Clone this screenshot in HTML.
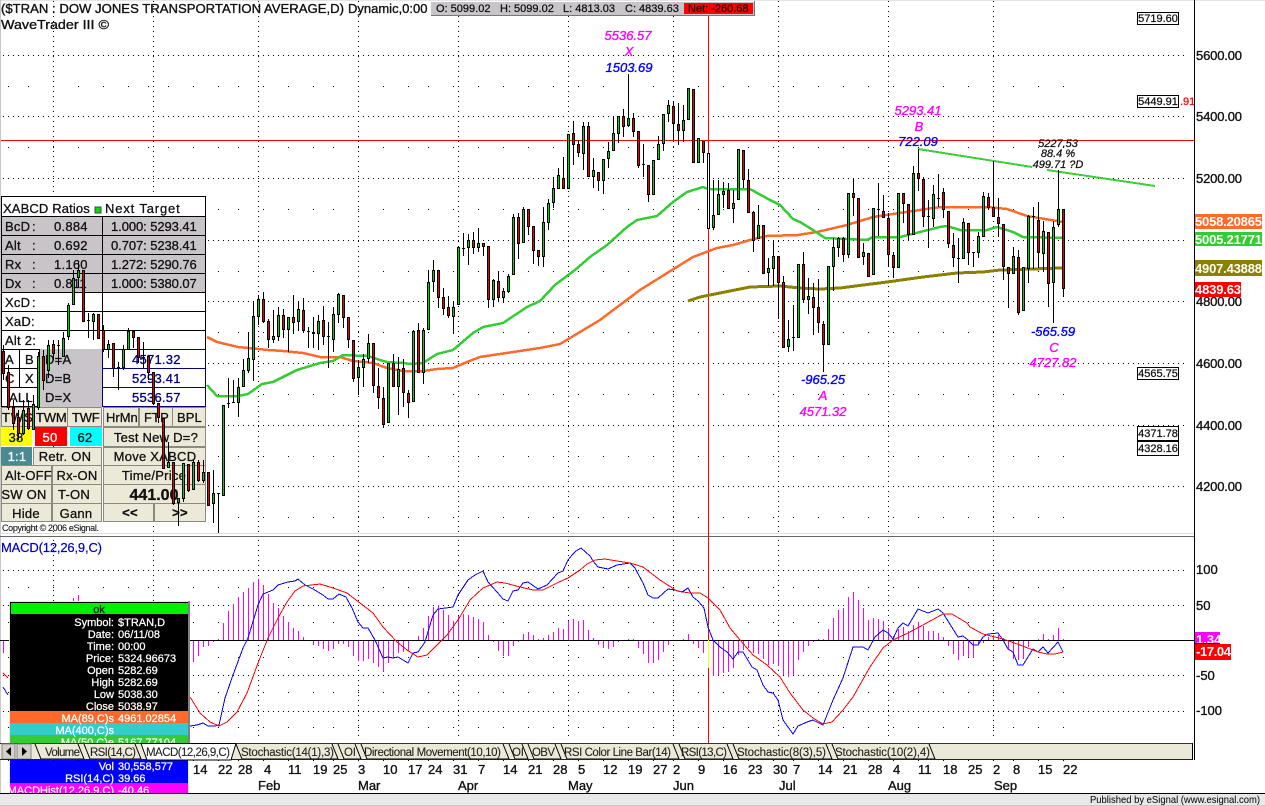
<!DOCTYPE html>
<html><head><meta charset="utf-8"><title>$TRAN</title>
<style>
html,body{margin:0;padding:0;background:#fff;width:1265px;height:806px;overflow:hidden}
svg{display:block;font-family:"Liberation Sans",Arial,sans-serif}
.c{shape-rendering:crispEdges}
text{fill:#111;stroke:#111;stroke-width:.25px}
.g{fill:none;stroke:#000;stroke-width:1;stroke-dasharray:1 4;shape-rendering:crispEdges}
.p text{font-size:13px;letter-spacing:.25px;stroke-width:.3px}
.b{fill:#ece9d8;stroke:#8a8a80;shape-rendering:crispEdges}
.m{fill:#f0f;stroke:#f0f;font-style:italic;font-size:13px;text-anchor:middle;stroke-width:.35px}
.bl{fill:#00f;stroke:#00f;font-style:italic;font-size:13px;text-anchor:middle;stroke-width:.35px}
.k{font-style:italic;font-size:11px;text-anchor:middle}
.ax{font-size:13px;stroke-width:.35px}
.w{fill:#fff;stroke:#fff;font-size:11px;stroke-width:.25px}
.r{text-anchor:end}
.t{font-size:11.5px;stroke-width:.1px;fill:#222;stroke:#222}
.tag{fill:#fff;stroke:#fff;font-size:13px;font-weight:bold;stroke-width:0}
.bx{font-size:11px;text-anchor:middle}
.mid{text-anchor:middle}
</style></head>
<body>
<svg width="1265" height="806" viewBox="0 0 1265 806" xmlns="http://www.w3.org/2000/svg">
<defs>
<path id="wk" d="M8 0h1M28 0h1M53 0h1M78 0h1M103 0h1M128 0h1M148 0h1M168 0h1M193 0h1M218 0h1M238 0h1M263 0h1M288 0h1M313 0h1M333 0h1M358 0h1M383 0h1M408 0h1M428 0h1M453 0h1M478 0h1M503 0h1M528 0h1M553 0h1M578 0h1M603 0h1M628 0h1M653 0h1M673 0h1M698 0h1M723 0h1M748 0h1M773 0h1M793 0h1M818 0h1M843 0h1M868 0h1M893 0h1M918 0h1M943 0h1M968 0h1M993 0h1M1013 0h1M1038 0h1M1063 0h1" stroke="#000" stroke-width="1" class="c"/>
</defs>
<rect width="1265" height="806" fill="#fff"/>
<path d="M0 0H1265M.5 0V793" stroke="#c8c8c8" fill="none" class="c"/>

<!-- grid -->
<path class="g" d="M3 55.5H1185M3 116.5H1185M3 178.5H1185M3 240.5H1185M3 301.5H1185M3 363.5H1185M3 425.5H1185M3 486.5H1185M3 570.5H1185M3 605.5H1185M3 675.5H1185M3 711.5H1185"/>
<path class="g" d="M53.5 1V535M153.5 1V535M258.5 1V535M358.5 1V535M458.5 1V535M568.5 1V535M673.5 1V535M778.5 1V535M888.5 1V535M993.5 1V535M53.5 540V740M153.5 540V740M258.5 540V740M358.5 540V740M458.5 540V740M568.5 540V740M673.5 540V740M778.5 540V740M888.5 540V740M993.5 540V740"/>
<use href="#wk" y="86.5"/><use href="#wk" y="147.5"/><use href="#wk" y="209.5"/><use href="#wk" y="271.5"/><use href="#wk" y="332.5"/><use href="#wk" y="394.5"/><use href="#wk" y="456.5"/><use href="#wk" y="517.5"/>
<use href="#wk" y="587.5"/><use href="#wk" y="622.5"/><use href="#wk" y="657.5"/><use href="#wk" y="692.5"/><use href="#wk" y="727.5"/>

<!-- XABCD panel -->
<g class="p">
<rect x="1.5" y="196.5" width="204" height="153" fill="#fff" stroke="#000" class="c"/>
<rect x="2" y="216" width="203" height="76" fill="#c8c4c8" class="c"/>
<path d="M1 216.5H206M1 235.5H206M1 254.5H206M1 273.5H206M1 292.5H206M1 311.5H206M1 330.5H206M102.5 216V349" stroke="#000" class="c"/>
<text x="3" y="213" textLength="87">XABCD Ratios</text><rect x="95" y="207" width="6" height="6" fill="#00e000" stroke="#444" class="c"/><text x="105" y="213" textLength="75">Next Target</text>
<text x="5" y="231">BcD</text><text x="32" y="231">:</text><text x="54" y="231">0.884</text><text x="111" y="231" textLength="86">1.000: 5293.41</text>
<text x="5" y="250">Alt</text><text x="32" y="250">:</text><text x="54" y="250">0.692</text><text x="111" y="250" textLength="86">0.707: 5238.41</text>
<text x="5" y="269">Rx</text><text x="32" y="269">:</text><text x="54" y="269">1.160</text><text x="111" y="269" textLength="86">1.272: 5290.76</text>
<text x="5" y="288">Dx</text><text x="32" y="288">:</text><text x="54" y="288">0.811</text><text x="111" y="288" textLength="86">1.000: 5380.07</text>
<text x="5" y="307">XcD</text><text x="32" y="307">:</text><text x="5" y="326">XaD:</text><text x="5" y="345">Alt 2:</text>
<rect x="40" y="349" width="62" height="58" fill="#c8c4c8" class="c"/>
<rect x="1.5" y="349.5" width="18" height="19" fill="#fff" stroke="#000" class="c"/><rect x="19.5" y="349.5" width="20" height="19" fill="#fff" stroke="#000" class="c"/>
<rect x="1.5" y="368.5" width="18" height="19" fill="#fff" stroke="#000" class="c"/><rect x="19.5" y="368.5" width="20" height="19" fill="#fff" stroke="#000" class="c"/>
<rect x="1.5" y="387.5" width="38" height="19" fill="#fff" stroke="#000" class="c"/>
<rect x="102.5" y="349.5" width="103" height="19" fill="#fff" stroke="#000080" class="c"/><rect x="102.5" y="368.5" width="103" height="19" fill="#fff" stroke="#000080" class="c"/><rect x="102.5" y="387.5" width="103" height="19" fill="#fff" stroke="#000080" class="c"/>
<text x="5" y="364">A</text><text x="25" y="364">B</text><text x="45" y="364">D=A</text>
<text x="5" y="383">C</text><text x="25" y="383">X</text><text x="45" y="383">D=B</text>
<text x="9" y="402">ALL</text><text x="45" y="402">D=X</text>
<text x="132" y="364" style="fill:#000080;stroke:#000080">4571.32</text><text x="132" y="383" style="fill:#000080;stroke:#000080">5293.41</text><text x="132" y="402" style="fill:#000080;stroke:#000080">5536.57</text>
<rect class="b" x="1.5" y="407.5" width="33" height="19"/><rect class="b" x="34.5" y="407.5" width="33" height="19"/><rect class="b" x="67.5" y="407.5" width="34" height="19"/><rect class="b" x="103.5" y="407.5" width="35" height="19"/><rect class="b" x="139.5" y="407.5" width="33" height="19"/><rect class="b" x="172.5" y="407.5" width="33" height="19"/>
<text x="2" y="422" textLength="31">TWS</text><text x="36" y="422" textLength="31">TWM</text><text x="72" y="422" textLength="28">TWF</text><text x="106" y="422" textLength="32">HrMn</text><text x="144" y="422" textLength="25">FTP</text><text x="177" y="422" textLength="25">BPL</text>
<rect x="1" y="427" width="31" height="19" fill="#ff0" class="c"/><rect x="35" y="427" width="32" height="19" fill="#f00" class="c"/><rect x="70" y="427" width="32" height="19" fill="#0ff" class="c"/>
<rect class="b" x="103.5" y="427.5" width="102" height="19"/>
<text x="16" y="442" class="mid">38</text><text x="50" y="442" class="mid" style="fill:#fff;stroke:#fff">50</text><text x="85" y="442" class="mid">62</text><text x="156" y="442" class="mid">Test New D=?</text>
<rect x="1" y="447" width="31" height="18" fill="#4a8a92" class="c"/><text x="17" y="461" class="mid" style="fill:#fff;stroke:#fff">1:1</text>
<rect class="b" x="33.5" y="447.5" width="68" height="18"/><text x="65" y="461" class="mid">Retr. ON</text>
<rect class="b" x="103.5" y="447.5" width="102" height="18"/><text x="155" y="461" class="mid">Move XABCD</text>
<rect class="b" x="1.5" y="465.5" width="50" height="19"/><text x="5" y="480" textLength="47">Alt-OFF</text>
<rect class="b" x="52.5" y="465.5" width="49" height="19"/><text x="77" y="480" class="mid">Rx-ON</text>
<rect class="b" x="103.5" y="465.5" width="102" height="19"/><text x="154" y="480" class="mid">Time/Price</text>
<rect class="b" x="1.5" y="484.5" width="50" height="19"/><text x="24" y="499" class="mid">SW ON</text>
<rect class="b" x="52.5" y="484.5" width="49" height="19"/><text x="74" y="499" class="mid">T-ON</text>
<rect class="b" x="103.5" y="484.5" width="102" height="19"/><text x="154" y="500" class="mid" style="font-size:16px;font-weight:bold;letter-spacing:0">441.00</text>
<rect class="b" x="1.5" y="503.5" width="50" height="18"/><text x="26" y="518" class="mid">Hide</text>
<rect class="b" x="52.5" y="503.5" width="49" height="18"/><text x="76" y="518" class="mid">Gann</text>
<rect class="b" x="103.5" y="503.5" width="50" height="18"/><text x="130" y="517" class="mid" style="font-weight:bold">&lt;&lt;</text>
<rect class="b" x="154.5" y="503.5" width="51" height="18"/><text x="180" y="517" class="mid" style="font-weight:bold">&gt;&gt;</text>
<text x="2" y="531" textLength="97" style="font-size:9px;stroke-width:.1px;letter-spacing:0">Copyright © 2006 eSignal.</text>
</g>
<path d="M0 533.5H1194" stroke="#ddd" class="c"/><path d="M0 536.5H1194" stroke="#666" class="c"/>

<!-- red cursor lines -->
<path d="M1 140.5H1194M708.5 16V743" stroke="#f00" class="c"/>

<!-- moving averages -->
<g fill="none" stroke-linejoin="round" class="c">
<polyline stroke="#ff6a2a" stroke-width="2.5" points="207,337 217,342 238,347 268,350 283,351 303,353 320,357 340,357 353,361 373,363 387,368 403,371 423,371 437,369 453,368 467,362 480,357 500,354 520,351 540,348 560,344 575,335 600,320 620,305 640,290 672,270 693,257 717,248 733,245 750,240 767,236 798,235 817,232 847,225 873,217 900,213 933,208 943,207 987,207 1007,209 1027,216 1063,222"/>
<polyline stroke="#32cd32" stroke-width="2.5" points="207,385 217,396 238,396 248,394 262,384 273,382 283,377 297,370 310,366 320,363 333,361 343,355 368,356 380,360 387,362 403,363 410,364 423,363 437,354 453,350 473,333 483,327 503,323 527,307 540,301 555,285 575,270 590,257 607,245 627,227 637,220 657,216 673,202 687,192 703,187 708,189 750,189 770,200 780,205 793,219 800,222 813,230 825,238 867,240 873,237 900,237 940,227 947,226 960,230 987,230 997,227 1013,232 1023,237 1063,238"/>
<polyline stroke="#8b8000" stroke-width="3" points="688,301 700,297 720,293 750,287 780,286 800,288 820,289 840,288 887,282 923,277 957,273 983,272 1000,270 1063,268"/>
<path stroke="#3ccf3c" stroke-width="2" d="M918 149L1032 167M1047 170L1155 186"/>
</g>

<!-- candle wicks -->
<path class="c" stroke="#000" fill="none" d="M3.5 345V380M8.5 365V410M13.5 400V430M18.5 410V440M23.5 400V435M28.5 400V430M33.5 395V430M38.5 352V410M43.5 350V390M48.5 340V378M53.5 340V360M58.5 340V365M63.5 332V356M68.5 303V340M73.5 270V305M78.5 262V287M83.5 270V321M88.5 313V338M93.5 313V340M98.5 314V338M103.5 325V352M108.5 340V358M113.5 343V377M118.5 362V390M123.5 345V370M128.5 328V350M133.5 330V348M138.5 337V363M143.5 342V368M148.5 356V380M153.5 372V405M158.5 403V423M163.5 418V468M168.5 442V467M173.5 462V505M178.5 498V526M183.5 463V502M188.5 464V492M193.5 460V490M198.5 460V482M203.5 460V483M208.5 472V505M213.5 470V523M218.5 493V533M223.5 405V495M228.5 378V408M233.5 380V403M238.5 378V417M243.5 359V387M248.5 332V373M253.5 301V381M258.5 295V325M263.5 292V323M268.5 319V348M273.5 310V343M278.5 307V341M283.5 309V338M288.5 317V352M293.5 295V334M298.5 302V331M303.5 298V333M308.5 327V348M313.5 317V348M318.5 315V350M323.5 306V345M328.5 322V368M333.5 307V352M338.5 293V323M343.5 295V328M348.5 317V348M353.5 340V382M358.5 360V395M363.5 354V387M368.5 334V363M373.5 343V393M378.5 368V409M383.5 387V428M388.5 363V422M393.5 354V386M398.5 357V415M403.5 359V407M408.5 390V418M413.5 330V402M418.5 323V372M423.5 328V384M428.5 270V330M433.5 260V292M438.5 270V308M443.5 288V315M448.5 296V318M453.5 301V334M458.5 247V305M463.5 233V256M468.5 234V265M473.5 232V254M478.5 228V252M483.5 243V256M488.5 246V308M493.5 279V307M498.5 271V302M503.5 288V303M508.5 274V293M513.5 214V275M518.5 213V259M523.5 207V243M528.5 209V235M533.5 226V264M538.5 250V266M543.5 207V267M548.5 199V230M553.5 177V208M558.5 168V189M563.5 157V189M568.5 134V189M573.5 121V165M578.5 140V157M583.5 122V170M588.5 122V176M593.5 158V188M598.5 172V191M603.5 159V194M608.5 142V168M613.5 117V150M618.5 116V143M623.5 109V137M628.5 74V127M633.5 113V137M638.5 131V168M643.5 144V177M648.5 165V202M653.5 160V194M658.5 136V159M663.5 114V151M668.5 100V122M673.5 102V140M678.5 103V145M683.5 105V142M688.5 88V119M693.5 89V162M698.5 138V162M703.5 141V163M713.5 180V230M718.5 180V215M723.5 182V208M728.5 183V208M733.5 190V223M738.5 149V199M743.5 150V188M748.5 169V212M753.5 211V252M758.5 205V238M763.5 225V273M768.5 258V286M773.5 240V286M778.5 256V319M783.5 276V347M788.5 320V352M793.5 305V351M798.5 264V337M803.5 252V303M808.5 278V314M813.5 283V335M818.5 279V333M823.5 321V372M828.5 266V344M833.5 238V291M838.5 237V257M843.5 237V262M848.5 193V258M853.5 178V216M858.5 198V257M863.5 243V265M868.5 253V276M873.5 208V274M878.5 183V236M883.5 195V217M888.5 213V267M893.5 252V278M898.5 193V267M903.5 193V223M908.5 204V241M913.5 166V234M918.5 149V191M923.5 177V227M928.5 200V248M933.5 185V227M938.5 174V207M943.5 188V218M948.5 211V248M953.5 233V267M958.5 238V283M963.5 218V258M968.5 223V265M973.5 252V267M978.5 232V258M983.5 192V236M988.5 193V210M993.5 161V216M998.5 198V237M1003.5 224V280M1008.5 267V308M1013.5 247V273M1018.5 250V315M1023.5 267V310M1028.5 215V283M1033.5 207V269M1038.5 202V268M1043.5 221V272M1048.5 232V307M1053.5 221V323M1058.5 170V227M1063.5 209V297"/>
<!-- doji ticks -->
<path class="c" stroke="#000" d="M87 320.5h3M57 345.5h3M117 367.5h3M142 357.5h3M217 493.5h3M227 403.5h3M232 402.5h3M307 331.5h3M327 336.5h3M462 248.5h3M642 164.5h3M792 337.5h3M877 209.5h3M927 216.5h3M937 198.5h3M957 258.5h3M972 252.5h3M1032 216.5h3"/>
<!-- green bodies -->
<path class="c" stroke="#000" fill="#00d400" d="M22.5 410.5h2v23h-2zM32.5 404.5h2v25h-2zM37.5 356.5h2v51h-2zM47.5 345.5h2v25h-2zM62.5 338.5h2v18h-2zM67.5 305.5h2v31h-2zM72.5 278.5h2v26h-2zM77.5 270.5h2v7h-2zM92.5 314.5h2v7h-2zM107.5 344.5h2v5h-2zM122.5 349.5h2v18h-2zM127.5 331.5h2v18h-2zM167.5 462.5h2v5h-2zM177.5 498.5h2v4h-2zM182.5 463.5h2v35h-2zM192.5 462.5h2v27h-2zM202.5 472.5h2v8h-2zM212.5 493.5h2v10h-2zM222.5 405.5h2v90h-2zM237.5 387.5h2v15h-2zM242.5 370.5h2v16h-2zM247.5 358.5h2v12h-2zM252.5 316.5h2v43h-2zM257.5 299.5h2v17h-2zM272.5 336.5h2v3h-2zM277.5 315.5h2v21h-2zM287.5 317.5h2v12h-2zM297.5 309.5h2v12h-2zM317.5 321.5h2v12h-2zM332.5 314.5h2v25h-2zM337.5 294.5h2v20h-2zM357.5 367.5h2v10h-2zM362.5 359.5h2v8h-2zM367.5 343.5h2v15h-2zM387.5 363.5h2v59h-2zM397.5 369.5h2v17h-2zM412.5 331.5h2v70h-2zM422.5 330.5h2v42h-2zM427.5 282.5h2v47h-2zM432.5 270.5h2v11h-2zM452.5 307.5h2v9h-2zM457.5 247.5h2v57h-2zM467.5 240.5h2v7h-2zM477.5 243.5h2v4h-2zM492.5 280.5h2v19h-2zM502.5 291.5h2v6h-2zM507.5 276.5h2v15h-2zM512.5 217.5h2v57h-2zM522.5 209.5h2v33h-2zM542.5 222.5h2v34h-2zM547.5 203.5h2v19h-2zM552.5 188.5h2v14h-2zM557.5 175.5h2v13h-2zM567.5 134.5h2v54h-2zM582.5 126.5h2v27h-2zM592.5 170.5h2v6h-2zM602.5 159.5h2v21h-2zM607.5 151.5h2v7h-2zM612.5 133.5h2v17h-2zM617.5 116.5h2v17h-2zM627.5 118.5h2v7h-2zM652.5 160.5h2v34h-2zM657.5 144.5h2v15h-2zM662.5 114.5h2v29h-2zM667.5 105.5h2v8h-2zM682.5 120.5h2v10h-2zM687.5 88.5h2v31h-2zM697.5 138.5h2v24h-2zM712.5 215.5h2v12h-2zM717.5 194.5h2v20h-2zM722.5 191.5h2v3h-2zM732.5 203.5h2v5h-2zM737.5 149.5h2v50h-2zM757.5 225.5h2v13h-2zM767.5 268.5h2v4h-2zM772.5 256.5h2v12h-2zM787.5 339.5h2v7h-2zM797.5 264.5h2v73h-2zM807.5 296.5h2v3h-2zM827.5 266.5h2v78h-2zM832.5 247.5h2v19h-2zM837.5 238.5h2v9h-2zM847.5 193.5h2v61h-2zM862.5 252.5h2v4h-2zM872.5 208.5h2v66h-2zM897.5 193.5h2v74h-2zM912.5 173.5h2v61h-2zM932.5 194.5h2v24h-2zM962.5 222.5h2v36h-2zM977.5 236.5h2v16h-2zM982.5 196.5h2v40h-2zM1012.5 256.5h2v17h-2zM1022.5 267.5h2v43h-2zM1027.5 216.5h2v52h-2zM1042.5 231.5h2v22h-2zM1052.5 227.5h2v55h-2zM1057.5 209.5h2v15h-2z"/>
<!-- red bodies -->
<path class="c" stroke="#000" fill="#ee0000" d="M2.5 351.5h2v22h-2zM7.5 372.5h2v35h-2zM12.5 407.5h2v16h-2zM17.5 417.5h2v16h-2zM27.5 408.5h2v20h-2zM42.5 356.5h2v24h-2zM52.5 344.5h2v9h-2zM82.5 270.5h2v51h-2zM97.5 314.5h2v24h-2zM102.5 330.5h2v19h-2zM112.5 343.5h2v25h-2zM132.5 331.5h2v6h-2zM137.5 337.5h2v20h-2zM147.5 356.5h2v16h-2zM152.5 372.5h2v31h-2zM157.5 403.5h2v14h-2zM162.5 418.5h2v50h-2zM172.5 462.5h2v41h-2zM187.5 464.5h2v26h-2zM197.5 462.5h2v18h-2zM207.5 472.5h2v33h-2zM262.5 299.5h2v22h-2zM267.5 321.5h2v18h-2zM282.5 315.5h2v14h-2zM292.5 317.5h2v5h-2zM302.5 310.5h2v20h-2zM312.5 332.5h2v1h-2zM322.5 320.5h2v16h-2zM342.5 295.5h2v22h-2zM347.5 317.5h2v22h-2zM352.5 340.5h2v38h-2zM372.5 343.5h2v42h-2zM377.5 386.5h2v11h-2zM382.5 398.5h2v26h-2zM392.5 363.5h2v23h-2zM402.5 368.5h2v24h-2zM407.5 393.5h2v9h-2zM417.5 330.5h2v42h-2zM437.5 270.5h2v27h-2zM442.5 297.5h2v11h-2zM447.5 307.5h2v8h-2zM472.5 240.5h2v7h-2zM482.5 243.5h2v3h-2zM487.5 246.5h2v53h-2zM497.5 281.5h2v16h-2zM517.5 217.5h2v26h-2zM527.5 209.5h2v17h-2zM532.5 226.5h2v24h-2zM537.5 250.5h2v6h-2zM562.5 178.5h2v10h-2zM572.5 133.5h2v11h-2zM577.5 144.5h2v8h-2zM587.5 126.5h2v50h-2zM597.5 172.5h2v8h-2zM622.5 116.5h2v10h-2zM632.5 118.5h2v13h-2zM637.5 131.5h2v34h-2zM647.5 165.5h2v29h-2zM672.5 106.5h2v17h-2zM677.5 124.5h2v6h-2zM692.5 89.5h2v73h-2zM702.5 141.5h2v11h-2zM727.5 190.5h2v18h-2zM742.5 150.5h2v29h-2zM747.5 180.5h2v32h-2zM752.5 212.5h2v28h-2zM762.5 225.5h2v48h-2zM777.5 256.5h2v26h-2zM782.5 282.5h2v65h-2zM802.5 264.5h2v35h-2zM812.5 297.5h2v10h-2zM817.5 307.5h2v15h-2zM822.5 324.5h2v20h-2zM842.5 238.5h2v16h-2zM852.5 193.5h2v4h-2zM857.5 198.5h2v59h-2zM867.5 253.5h2v23h-2zM882.5 211.5h2v6h-2zM887.5 218.5h2v36h-2zM892.5 255.5h2v12h-2zM902.5 193.5h2v10h-2zM907.5 204.5h2v30h-2zM917.5 173.5h2v5h-2zM922.5 179.5h2v37h-2zM942.5 192.5h2v17h-2zM947.5 211.5h2v32h-2zM952.5 245.5h2v12h-2zM967.5 223.5h2v29h-2zM987.5 197.5h2v10h-2zM992.5 207.5h2v9h-2zM997.5 217.5h2v6h-2zM1002.5 224.5h2v42h-2zM1007.5 267.5h2v6h-2zM1017.5 257.5h2v55h-2zM1037.5 220.5h2v32h-2zM1047.5 232.5h2v51h-2zM1062.5 209.5h2v79h-2z"/>
<path class="c" stroke="#000" fill="#fff" d="M707.5 153.5h2v75h-2z"/>

<!-- title -->
<text x="1" y="13" style="font-size:13px;stroke-width:.35px" textLength="343" lengthAdjust="spacingAndGlyphs">($TRAN : DOW JONES TRANSPORTATION AVERAGE,D)</text>
<text x="348" y="13" style="font-size:13px;stroke-width:.35px">Dynamic,0:00</text>
<text x="1" y="29" style="font-size:13px;stroke-width:.35px" textLength="108" lengthAdjust="spacingAndGlyphs">WaveTrader III ©</text>

<!-- OHLC strip -->
<rect x="430" y="1" width="325" height="15" fill="#c8c4c8" class="c"/>
<path d="M430.5 16V1.5H754" stroke="#fff" fill="none" class="c"/><path d="M431 15.5H754.5V1" stroke="#777" fill="none" class="c"/>
<rect x="684" y="3" width="69" height="11" fill="#f00" class="c"/>
<text x="436" y="12" style="font-size:11px">O: 5099.02</text><text x="500" y="12" style="font-size:11px">H: 5099.02</text><text x="563" y="12" style="font-size:11px">L: 4813.03</text><text x="625" y="12" style="font-size:11px">C: 4839.63</text><text x="688" y="12" style="font-size:11px">Net: -260.68</text>

<!-- annotations -->
<text class="m" x="628" y="40">5536.57</text><text class="m" x="629" y="56">X</text><text class="bl" x="629" y="72">1503.69</text>
<text class="m" x="918" y="115">5293.41</text><text class="m" x="919" y="131">B</text><text class="bl" x="918" y="146">722.09</text>
<text class="k" x="1058" y="147">5227.53</text><text class="k" x="1058" y="157">88.4 %</text><text class="k" x="1058" y="168">499.71 ?D</text>
<text class="bl" x="1053" y="336">-565.59</text><text class="m" x="1054" y="352">C</text><text class="m" x="1053" y="367">4727.82</text>
<text class="bl" x="823" y="384">-965.25</text><text class="m" x="823" y="400">A</text><text class="m" x="823" y="416">4571.32</text>

<!-- right boxes -->
<g class="c" fill="#fff" stroke="#000"><rect x="1137.5" y="12.5" width="41" height="12"/><rect x="1137.5" y="95.5" width="41" height="12"/><rect x="1137.5" y="367.5" width="41" height="12"/><rect x="1137.5" y="426.5" width="41" height="14"/><rect x="1137.5" y="441.5" width="41" height="14"/></g>
<text class="bx" x="1158" y="22">5719.60</text><text class="bx" x="1158" y="105">5449.91</text><text x="1180" y="105" style="font-size:11px;fill:#f00;stroke:#f00">.91</text><text class="bx" x="1158" y="377">4565.75</text><text class="bx" x="1158" y="437">4371.78</text><text class="bx" x="1158" y="452">4328.16</text>

<!-- right axis -->
<path class="c" stroke="#000" d="M1194.5 0V760"/>
<text class="ax" x="1196" y="60" textLength="46">5600.00</text><text class="ax" x="1196" y="121" textLength="46">5400.00</text><text class="ax" x="1196" y="183" textLength="46">5200.00</text><text class="ax" x="1196" y="306" textLength="46">4800.00</text><text class="ax" x="1196" y="368" textLength="46">4600.00</text><text class="ax" x="1196" y="430" textLength="46">4400.00</text><text class="ax" x="1196" y="491" textLength="46">4200.00</text>
<rect x="1195" y="214" width="67" height="15" fill="#ff6a2a" class="c"/><text class="tag" x="1195" y="226" textLength="67">5058.20865</text>
<rect x="1195" y="232" width="67" height="14" fill="#32cd32" class="c"/><text class="tag" x="1195" y="244" textLength="67">5005.21771</text>
<rect x="1195" y="260" width="67" height="16" fill="#8b8000" class="c"/><text class="tag" x="1195" y="273" textLength="67">4907.43888</text>
<rect x="1195" y="282" width="46" height="15" fill="#f00" class="c"/><text class="tag" x="1195" y="294" textLength="46">4839.63</text>

<!-- MACD -->
<text x="1" y="552" textLength="101" style="font-size:13px;fill:#0000c0;stroke:#0000c0;stroke-width:.2px">MACD(12,26,9,C)</text>
<path class="c" stroke="#f0f" fill="none" d="M3.5 640V653M73.5 598V640M78.5 595V640M193.5 640V662M198.5 640V656M203.5 640V647M208.5 640V646M213.5 640V642M218.5 640V639M223.5 640V623M228.5 640V611M233.5 640V604M238.5 640V597M243.5 640V592M248.5 640V588M253.5 640V582M258.5 640V579M263.5 640V585M268.5 640V594M273.5 640V603M278.5 640V608M283.5 640V616M288.5 640V622M293.5 640V628M298.5 640V631M303.5 640V637M308.5 640V641M313.5 640V645M318.5 640V646M323.5 640V649M328.5 640V651M333.5 640V649M338.5 640V644M343.5 640V644M348.5 640V647M353.5 640V656M358.5 640V661M363.5 640V661M368.5 640V659M373.5 640V663M378.5 640V667M383.5 640V672M388.5 640V663M393.5 640V658M398.5 640V653M403.5 640V652M408.5 640V651M418.5 640V636M423.5 640V628M428.5 640V616M433.5 640V607M438.5 640V605M443.5 640V610M448.5 640V615M453.5 640V621M458.5 640V616M463.5 640V614M468.5 640V615M473.5 640V617M478.5 640V619M483.5 640V622M488.5 640V635M493.5 640V642M498.5 640V651M503.5 640V656M508.5 640V656M513.5 640V646M518.5 640V642M523.5 640V634M528.5 640V632M533.5 640V635M538.5 640V639M543.5 640V638M548.5 640V635M553.5 640V632M558.5 640V628M563.5 640V629M568.5 640V621M573.5 640V619M578.5 640V621M583.5 640V620M588.5 640V630M593.5 640V638M598.5 640V645M603.5 640V648M608.5 640V649M613.5 640V647M618.5 640V642M623.5 640V641M628.5 640V639M633.5 640V639M638.5 640V648M643.5 640V654M648.5 640V663M653.5 640V663M658.5 640V660M663.5 640V652M668.5 640V645M673.5 640V641M683.5 640V639M688.5 640V634M693.5 640V644M698.5 640V648M703.5 640V653M713.5 640V676M718.5 640V675M723.5 640V673M728.5 640V672M733.5 640V668M738.5 640V655M743.5 640V650M748.5 640V648M753.5 640V653M758.5 640V654M763.5 640V659M768.5 640V665M773.5 640V664M778.5 640V666M783.5 640V675M788.5 640V677M793.5 640V675M798.5 640V660M803.5 640V652M808.5 640V646M813.5 640V642M818.5 640V639M823.5 640V639M828.5 640V629M833.5 640V618M838.5 640V610M843.5 640V608M848.5 640V597M853.5 640V592M858.5 640V600M863.5 640V608M868.5 640V620M873.5 640V618M878.5 640V619M883.5 640V621M888.5 640V628M893.5 640V636M898.5 640V629M903.5 640V627M908.5 640V631M913.5 640V625M918.5 640V622M923.5 640V626M928.5 640V631M933.5 640V631M938.5 640V633M943.5 640V637M948.5 640V646M953.5 640V654M958.5 640V660M963.5 640V656M968.5 640V657M973.5 640V658M978.5 640V645M983.5 640V643M988.5 640V637M993.5 640V635M998.5 640V635M1003.5 640V638M1008.5 640V650M1013.5 640V659M1018.5 640V660M1023.5 640V659M1028.5 640V647M1038.5 640V639M1043.5 640V634M1048.5 640V639M1053.5 640V635M1058.5 640V628M1063.5 640V639"/>
<path d="M0 640.5H1194" stroke="#000" stroke-width="1.4" class="c"/>
<path d="M708.5 640V668" stroke="#ff0" class="c"/><path d="M708.5 625V628" stroke="#0c0" class="c"/>
<g fill="none" class="c">
<polyline stroke="#f00" points="3,673 8,678"/><polyline stroke="#00f" points="3,687 8,695"/>
<polyline stroke="#00f" points="190,726 197,725 203,723 208,726 215,726 219,725 225,698 233,675 243,648 248,638 258,605 263,594 273,590 278,585 288,582 295,581 298,579 305,585 313,589 323,595 328,599 333,599 339,594 346,597 352,608 358,622 363,628 368,628 375,640 383,658 388,657 393,658 398,657 408,663 413,653 418,652 425,642 433,615 438,609 453,607 458,595 468,580 475,575 483,571 488,582 497,592 503,599 508,601 513,591 518,590 523,583 528,582 538,589 547,585 558,573 563,571 568,560 572,555 576,551 581,548 590,556 593,561 598,567 608,569 617,565 630,563 635,568 643,583 648,595 653,598 658,598 668,589 675,590 682,592 688,588 693,597 698,601 704,608 708,627 713,640 720,647 727,652 733,659 738,652 743,652 752,667 757,670 763,685 768,692 773,693 778,700 783,720 793,734 798,726 807,722 813,720 823,725 833,700 843,678 853,647 863,647 868,650 875,637 883,630 888,633 893,639 898,628 903,623 908,626 918,609 928,613 938,609 943,613 958,637 963,636 968,640 973,645 978,645 983,637 988,634 998,633 1003,640 1008,649 1013,652 1018,665 1023,665 1033,649 1038,652 1043,647 1048,653 1058,642 1063,652"/>
<polyline stroke="#f00" points="190,697 200,713 210,722 219,726 227,722 237,712 247,693 258,663 268,638 278,618 287,602 295,591 303,586 320,584 333,588 347,593 360,603 373,613 383,627 397,642 407,650 418,657 427,655 435,647 447,635 458,620 470,600 483,588 497,582 505,583 520,587 533,590 543,590 557,583 568,578 580,570 587,564 595,560 605,559 617,561 630,563 643,567 660,580 677,591 690,593 700,593 708,598 720,610 730,628 740,640 753,655 767,665 780,677 790,693 803,710 813,718 823,724 832,722 843,710 853,697 870,667 883,648 893,640 908,633 923,625 943,614 952,614 967,623 970,627 983,634 1003,639 1020,645 1038,652 1047,654 1055,654 1063,652"/>
</g>
<text class="ax" x="1196" y="574">100</text><text class="ax" x="1196" y="610">50</text><text class="ax" x="1196" y="680">-50</text><text class="ax" x="1196" y="715">-100</text>
<rect x="1195" y="632" width="25" height="11" fill="#f0f" class="c"/><text class="tag" x="1196" y="644">1.34</text>
<rect x="1195" y="643" width="25" height="1" fill="#00f" class="c"/>
<rect x="1195" y="644" width="36" height="16" fill="#f00" class="c"/><text class="tag" x="1196" y="656" textLength="35">-17.04</text>

<!-- data tooltip -->
<rect x="9" y="601" width="180" height="192" fill="#ece9d8" class="c"/>
<rect x="188" y="601" width="2" height="142" fill="#808080" class="c"/>
<rect x="10" y="602" width="178" height="191" fill="#000" class="c"/>
<rect x="11" y="603" width="177" height="11" fill="#00f000" class="c"/>
<text x="99" y="613" class="mid" style="font-size:11px">ok</text>
<rect x="10" y="711" width="178" height="12" fill="#ff6a2a" class="c"/>
<rect x="10" y="723" width="178" height="12" fill="#33cccc" class="c"/>
<rect x="10" y="735" width="178" height="9" fill="#32cd32" class="c"/>
<rect x="10" y="760" width="178" height="23" fill="#00f" class="c"/>
<rect x="10" y="783" width="178" height="10" fill="#f0f" class="c"/>
<text class="w r" x="114" y="626">Symbol:</text><text class="w" x="118" y="626">$TRAN,D</text>
<text class="w r" x="114" y="638">Date:</text><text class="w" x="118" y="638">06/11/08</text>
<text class="w r" x="114" y="650">Time:</text><text class="w" x="118" y="650">00:00</text>
<text class="w r" x="114" y="662">Price:</text><text class="w" x="118" y="662">5324.96673</text>
<text class="w r" x="114" y="674">Open</text><text class="w" x="118" y="674">5282.69</text>
<text class="w r" x="114" y="686">High</text><text class="w" x="118" y="686">5282.69</text>
<text class="w r" x="114" y="698">Low</text><text class="w" x="118" y="698">5038.30</text>
<text class="w r" x="114" y="710">Close</text><text class="w" x="118" y="710">5038.97</text>
<text class="w r" x="114" y="722">MA(89,C)s</text><text class="w" x="118" y="722">4961.02854</text>
<text class="w r" x="114" y="734">MA(400,C)s</text>
<text class="w r" x="114" y="746">MA(50,C)e</text><text class="w" x="118" y="746">5167.77104</text>
<text class="w r" x="114" y="770">Vol</text><text class="w" x="118" y="770">30,558,577</text>
<text class="w r" x="114" y="782">RSI(14,C)</text><text class="w" x="118" y="782">39.66</text>
<text class="w r" x="114" y="794">MACDHist(12,26,9,C)</text><text class="w" x="118" y="794">-40.46</text>

<!-- tab bar -->
<rect x="0" y="743" width="1193" height="17" fill="#ece9d8" class="c"/>
<path d="M0 743.5H1193" stroke="#333" class="c"/>
<path d="M1192.5 743V760" stroke="#000" class="c"/>
<rect x="2" y="744" width="13" height="15" fill="#d4d0c8" stroke="#888" class="c"/><path d="M11 747v9l-5-4.500z" fill="#000"/>
<rect x="17" y="744" width="14" height="15" fill="#d4d0c8" stroke="#888" class="c"/><path d="M22 747v9l5-4.500z" fill="#000"/>
<g fill="#ece9d8" stroke="#000">
<path d="M35 744l6 15H84l-6-15"/>
<path d="M84 744l6 15h51l-6-15"/>
<path d="M236 744l6 15h96l-6-15"/>
<path d="M338 744l6 15h17l-6-15"/>
<path d="M361 744l6 15h142l-6-15"/>
<path d="M509 744l6 15h13l-6-15"/>
<path d="M528 744l6 15h27l-6-15"/>
<path d="M561 744l6 15h112l-6-15"/>
<path d="M679 744l6 15h48l-6-15"/>
<path d="M733 744l6 15h93l-6-15"/>
<path d="M832 744l6 15h97l-6-15"/>
</g>
<path d="M0 759.5H1192" stroke="#222" class="c"/>
<path d="M141 743.5L147 760H231L236 743.5z" fill="#fff" stroke="#000"/>
<text class="t" x="45" y="756" textLength="35">Volume</text>
<text class="t" x="90" y="756" textLength="46">RSI(14,C)</text>
<text class="t" x="146" y="756" textLength="84">MACD(12,26,9,C)</text>
<text class="t" x="241" y="756" textLength="93">Stochastic(14(1),3)</text>
<text class="t" x="344" y="756" textLength="12">OI</text>
<text class="t" x="364" y="756" textLength="137">Directional Movement(10,10)</text>
<text class="t" x="512" y="756" textLength="12">OI</text>
<text class="t" x="532" y="756" textLength="23">OBV</text>
<text class="t" x="564" y="756" textLength="107">RSI Color Line Bar(14)</text>
<text class="t" x="681" y="756" textLength="46">RSI(13,C)</text>
<text class="t" x="737" y="756" textLength="89">Stochastic(8(3),5)</text>
<text class="t" x="835" y="756" textLength="95">Stochastic(10(2),4)</text>

<!-- date axis -->
<text class="ax" x="193" y="774">14</text><text class="ax" x="218" y="774">22</text><text class="ax" x="238" y="774">28</text><text class="ax" x="264" y="774">4</text><text class="ax" x="288" y="774">11</text><text class="ax" x="313" y="774">19</text><text class="ax" x="333" y="774">25</text><text class="ax" x="358" y="774">3</text><text class="ax" x="383" y="774">10</text><text class="ax" x="408" y="774">17</text><text class="ax" x="428" y="774">24</text><text class="ax" x="453" y="774">31</text><text class="ax" x="478" y="774">7</text><text class="ax" x="503" y="774">14</text><text class="ax" x="528" y="774">21</text><text class="ax" x="553" y="774">28</text><text class="ax" x="578" y="774">5</text><text class="ax" x="603" y="774">12</text><text class="ax" x="628" y="774">19</text><text class="ax" x="653" y="774">27</text><text class="ax" x="673" y="774">2</text><text class="ax" x="698" y="774">9</text><text class="ax" x="723" y="774">16</text><text class="ax" x="748" y="774">23</text><text class="ax" x="773" y="774">30</text><text class="ax" x="793" y="774">7</text><text class="ax" x="818" y="774">14</text><text class="ax" x="843" y="774">21</text><text class="ax" x="868" y="774">28</text><text class="ax" x="893" y="774">4</text><text class="ax" x="918" y="774">11</text><text class="ax" x="943" y="774">18</text><text class="ax" x="968" y="774">25</text><text class="ax" x="993" y="774">2</text><text class="ax" x="1013" y="774">8</text><text class="ax" x="1038" y="774">15</text><text class="ax" x="1063" y="774">22</text>
<text class="ax" x="258" y="790">Feb</text><text class="ax" x="358" y="790">Mar</text><text class="ax" x="458" y="790">Apr</text><text class="ax" x="568" y="790">May</text><text class="ax" x="673" y="790">Jun</text><text class="ax" x="779" y="790">Jul</text><text class="ax" x="888" y="790">Aug</text><text class="ax" x="994" y="790">Sep</text>
<use href="#wk" y="760.5"/>

<!-- status bar -->
<rect x="0" y="794" width="1265" height="12" fill="#e8e8e8" class="c"/>
<path d="M0 793.5H1265" stroke="#000" class="c"/>
<path d="M0 805.5H1265" stroke="#ccc" class="c"/>
<text x="1090" y="803" textLength="170" lengthAdjust="spacingAndGlyphs" style="font-size:10.5px;stroke-width:.08px">Published by eSignal (www.esignal.com)</text>
</svg>
</body></html>
